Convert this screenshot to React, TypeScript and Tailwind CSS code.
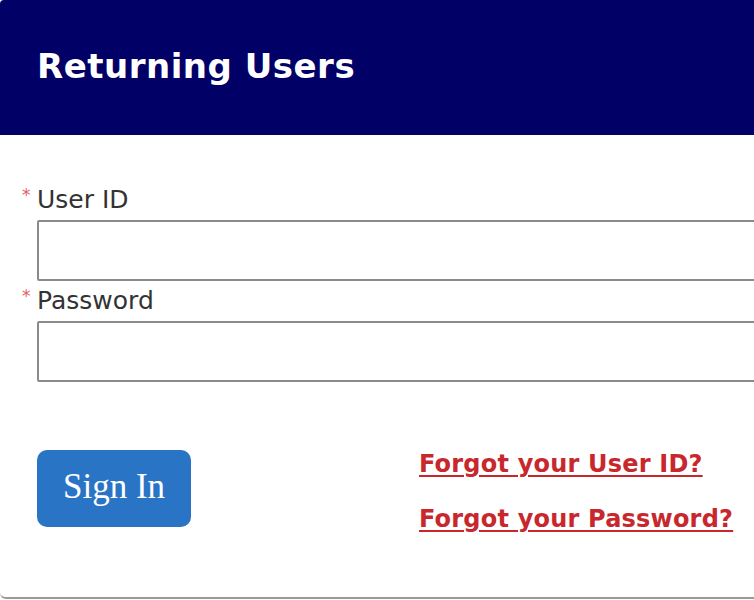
export default function App() {
  return (
    <div className="h-[600px] w-[754px] overflow-hidden bg-white">
      <div className="h-[599px] rounded-bl-[6px] border-b-2 border-[#9a9a9a]">
        <div className="flex h-[135px] items-center rounded-tl-[4px] bg-[#000066] pl-[37px]">
          <h1 className="pb-[2px] font-['DejaVu_Sans',sans-serif] text-[34px] font-bold tracking-[0.5px] text-white">
            Returning Users
          </h1>
        </div>

        <form className="pt-[49px] font-['DejaVu_Sans',sans-serif]">
          <label className="mb-[4px] flex items-start pl-[22px] text-[25px] leading-[32px] text-[#333]">
            <span className="w-[15px] pt-[3px] text-[17px] leading-[16px] text-[#e0625e]">*</span>
            User ID
          </label>
          <input
            type="text"
            className="ml-[37px] block h-[61px] w-[740px] rounded-[2px] border-2 border-[#8a8a8a] bg-white"
          />
          <label className="mb-[4px] mt-[4px] flex items-start pl-[22px] text-[25px] leading-[32px] text-[#333]">
            <span className="w-[15px] pt-[3px] text-[17px] leading-[16px] text-[#e0625e]">*</span>
            Password
          </label>
          <input
            type="password"
            className="ml-[37px] block h-[61px] w-[740px] rounded-[2px] border-2 border-[#8a8a8a] bg-white"
          />

          <div className="mt-[68px] flex pl-[37px]">
            <button
              type="button"
              className="h-[77px] w-[154px] rounded-[10px] bg-[#2a74c6] pb-[2px] font-['Liberation_Serif',serif] text-[35px] text-white"
            >
              Sign In
            </button>
            <div className="ml-[228px] flex flex-col gap-[26px] text-[24px] font-bold leading-[29px] tracking-[0.2px] text-[#c8282d]">
              <a href="#" className="underline decoration-2 underline-offset-[3px]">
                Forgot your User ID?
              </a>
              <a href="#" className="underline decoration-2 underline-offset-[3px]">
                Forgot your Password?
              </a>
            </div>
          </div>
        </form>
      </div>
    </div>
  );
}
